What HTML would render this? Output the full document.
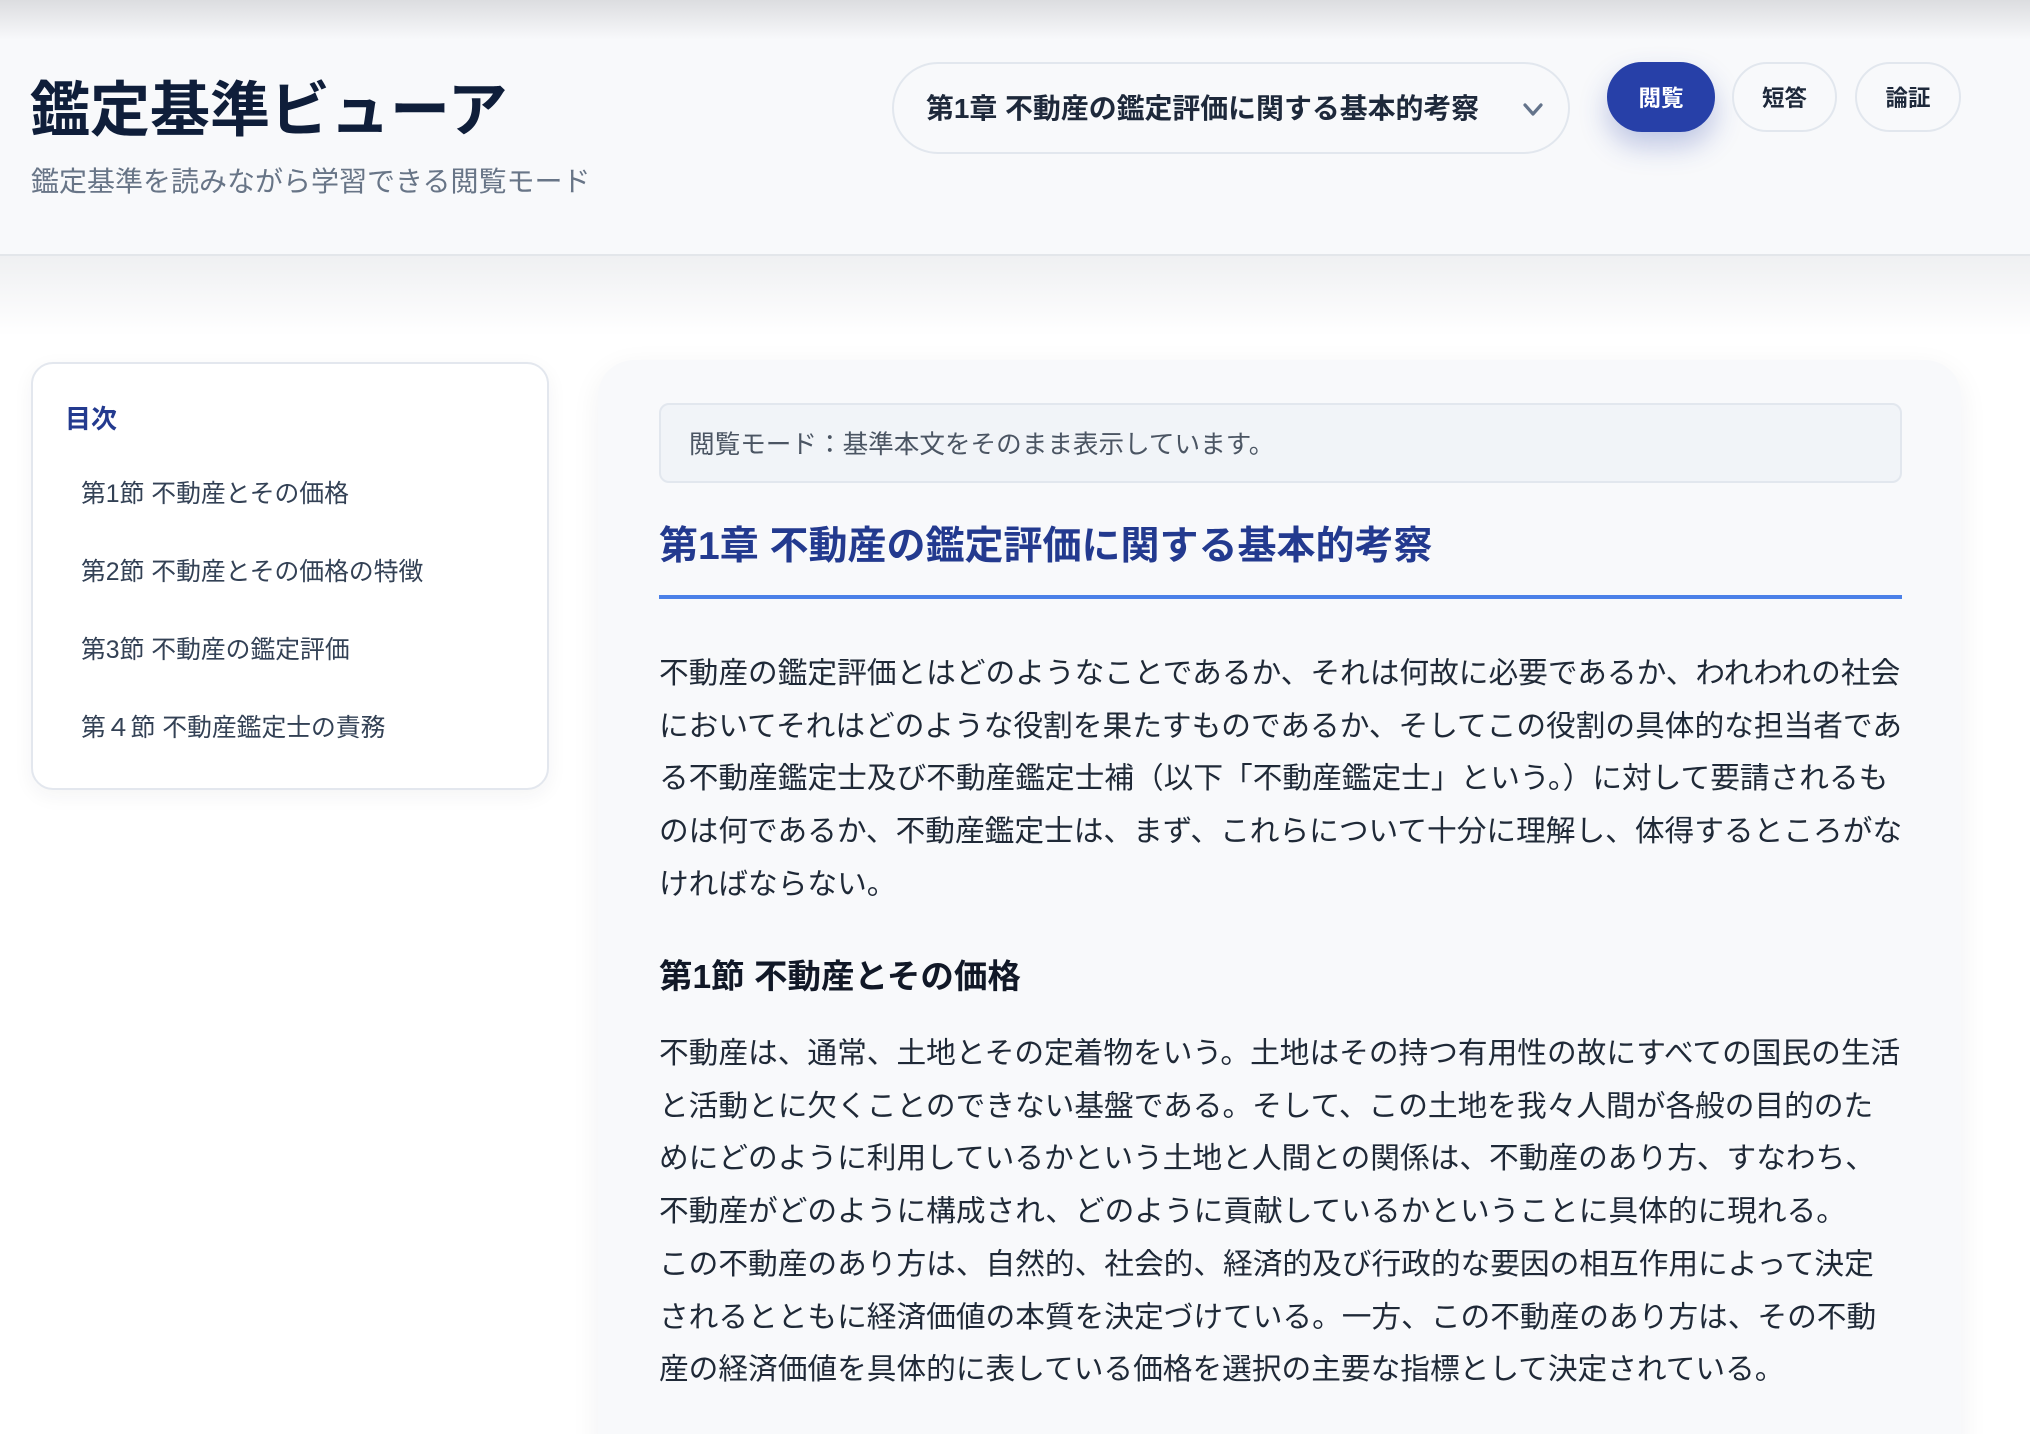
<!DOCTYPE html>
<html lang="ja"><head><meta charset="utf-8">
<style>
*{box-sizing:border-box;margin:0;padding:0}
html,body{width:2030px;height:1434px;overflow:hidden;background:#fff}
body{font-family:"Liberation Sans","Noto Sans CJK JP",sans-serif;position:relative}
.hdr{position:absolute;left:0;top:0;width:2030px;height:256px;background:#f8f9fb;border-bottom:2px solid #e3e6ea}
.topsh{position:absolute;left:0;top:0;width:2030px;height:40px;background:linear-gradient(#dcdde0,rgba(248,249,251,0))}
.undersh{position:absolute;left:0;top:256px;width:2030px;height:80px;background:linear-gradient(#eff0f2,rgba(255,255,255,0))}
.title{position:absolute;left:30px;top:71px;font-size:60px;font-weight:700;color:#0f1e3a;line-height:80px;white-space:nowrap}
.sub{position:absolute;left:31px;top:162px;font-size:28px;color:#687587;line-height:40px;white-space:nowrap}
.sel{position:absolute;left:892px;top:62px;width:678px;height:92px;border:2px solid #e2e7ee;border-radius:46px;background:#f8f9fb}
.sel span{position:absolute;left:32px;top:23px;font-size:27.9px;font-weight:700;color:#1e293b;line-height:44px;white-space:nowrap}
.sel svg{position:absolute;left:628px;top:38px}
.btn{position:absolute;top:62px;height:70px;border-radius:35px;font-size:22.5px;font-weight:700;line-height:70px;text-align:center;border:2px solid #e2e7ee;background:#f8f9fb;color:#1e293b}
.btn.on{background:#2740a8;border-color:#2740a8;color:#fff;box-shadow:0 14px 28px rgba(39,64,168,.28)}
.side{position:absolute;left:31px;top:362px;width:518px;height:428px;background:#fff;border:2px solid #e3e7ee;border-radius:22px;box-shadow:0 6px 20px rgba(30,41,59,.05)}
.side h3{position:absolute;left:32px;top:35px;font-size:26px;font-weight:700;color:#233a8f;line-height:40px}
.side a{position:absolute;left:48px;font-size:24.8px;color:#334155;line-height:36px;white-space:nowrap;text-decoration:none}
.main{position:absolute;left:598px;top:360px;width:1363px;height:1120px;background:#f8f9fb;border-radius:36px;box-shadow:0 8px 30px rgba(30,41,59,.06)}
.info{position:absolute;left:61px;top:43px;width:1243px;height:80px;background:#f1f4f8;border:2px solid #e2e7ee;border-radius:10px}
.info span{position:absolute;left:28px;top:22px;font-size:25.6px;color:#4b5563;line-height:36px;white-space:nowrap}
.h1{position:absolute;left:61px;top:159px;font-size:39px;font-weight:700;color:#233a8f;line-height:56px;white-space:nowrap}
.rule{position:absolute;left:61px;top:235px;width:1243px;height:4px;background:#4b80e8}
.p{position:absolute;left:61px;font-size:29.7px;color:#1f2937;line-height:52.7px;white-space:nowrap}
.h2{position:absolute;left:61px;top:594px;font-size:33.5px;font-weight:700;color:#111827;line-height:48px;white-space:nowrap}
</style></head><body>
<div class="hdr"></div><div class="topsh"></div><div class="undersh"></div>
<div class="title">鑑定基準ビューア</div>
<div class="sub">鑑定基準を読みながら学習できる閲覧モード</div>
<div class="sel"><span>第1章 不動産の鑑定評価に関する基本的考察</span>
<svg width="22" height="16" viewBox="0 0 22 16"><path d="M3 3 L11 12 L19 3" fill="none" stroke="#64748b" stroke-width="3.2" stroke-linecap="round" stroke-linejoin="round"/></svg></div>
<div class="btn on" style="left:1607px;width:108px">閲覧</div>
<div class="btn" style="left:1732px;width:105px">短答</div>
<div class="btn" style="left:1855px;width:106px">論証</div>

<div class="side"><h3>目次</h3>
<a style="top:113px">第1節 不動産とその価格</a>
<a style="top:191px">第2節 不動産とその価格の特徴</a>
<a style="top:269px">第3節 不動産の鑑定評価</a>
<a style="top:347px">第４節 不動産鑑定士の責務</a>
</div>

<div class="main">
<div class="info"><span>閲覧モード：基準本文をそのまま表示しています。</span></div>
<div class="h1">第1章 不動産の鑑定評価に関する基本的考察</div>
<div class="rule"></div>
<div class="p" style="top:288px">不動産の鑑定評価とはどのようなことであるか、それは何故に必要であるか、われわれの社会<br>においてそれはどのような役割を果たすものであるか、そしてこの役割の具体的な担当者であ<br>る不動産鑑定士及び不動産鑑定士補（以下「不動産鑑定士」という。）に対して要請されるも<br>のは何であるか、不動産鑑定士は、まず、これらについて十分に理解し、体得するところがな<br>ければならない。</div>
<div class="h2">第1節 不動産とその価格</div>
<div class="p" style="top:668px">不動産は、通常、土地とその定着物をいう。土地はその持つ有用性の故にすべての国民の生活<br>と活動とに欠くことのできない基盤である。そして、この土地を我々人間が各般の目的のた<br>めにどのように利用しているかという土地と人間との関係は、不動産のあり方、すなわち、<br>不動産がどのように構成され、どのように貢献しているかということに具体的に現れる。<br>この不動産のあり方は、自然的、社会的、経済的及び行政的な要因の相互作用によって決定<br>されるとともに経済価値の本質を決定づけている。一方、この不動産のあり方は、その不動<br>産の経済価値を具体的に表している価格を選択の主要な指標として決定されている。</div>
</div>
</body></html>
